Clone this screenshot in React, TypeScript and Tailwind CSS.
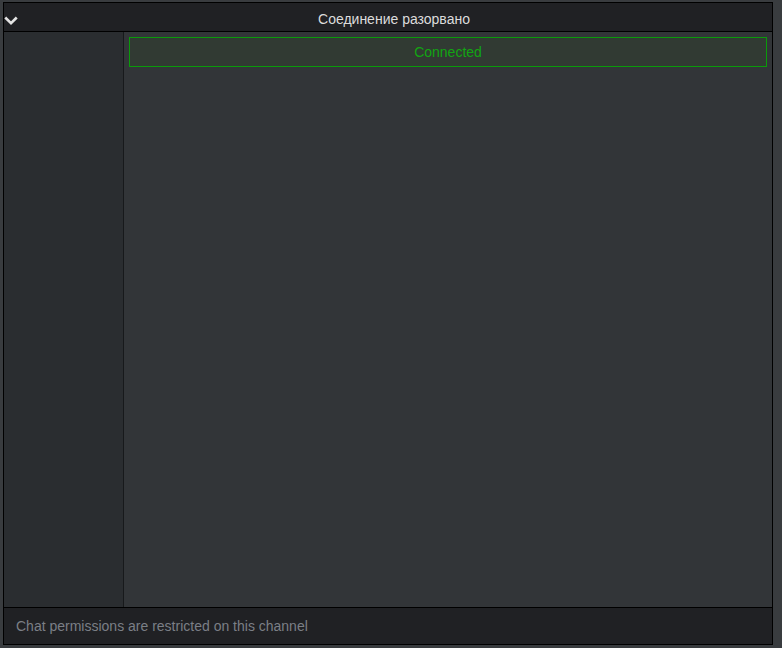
import React from 'react';

export default function App() {
  return (
    <div
      className="w-[782px] h-[648px] bg-[#393c3f] pl-[3px] pt-[2px]"
      style={{ fontFamily: '"Liberation Sans", Arial, sans-serif' }}
    >
      <div className="w-[770px] h-[643px] border border-black flex flex-col bg-[#323538]">
        {/* Header */}
        <div className="h-[29px] shrink-0 bg-[#202124] border-b border-black flex items-center">
          <svg viewBox="0 0 16 16" className="w-[14px] h-[14px] mt-[7px]">
            <path d="M2.5 5 L8 10.5 L13.5 5" fill="none" stroke="#e4e4e4" strokeWidth="3" strokeLinecap="square" />
          </svg>
          <div className="flex-1 text-center text-[14px] text-[#dcdcdc] pt-[4px] pr-[2px]">Соединение разорвано</div>
        </div>

        {/* Body */}
        <div className="flex-1 flex min-h-0">
          <div className="w-[120px] shrink-0 bg-[#2a2d30] border-r border-[#17191b]" />
          <div className="flex-1 px-[5px] pt-[5px]">
            <div className="h-[30px] border border-[#0a9a0a] bg-[#313a33] flex items-center justify-center text-[14px] text-[#12a512]">
              Connected
            </div>
          </div>
        </div>

        {/* Footer */}
        <div className="h-[37px] shrink-0 bg-[#202124] border-t border-black flex items-center px-[12px] text-[14px] text-[#7b7f86]">
          Chat permissions are restricted on this channel
        </div>
      </div>
    </div>
  );
}
